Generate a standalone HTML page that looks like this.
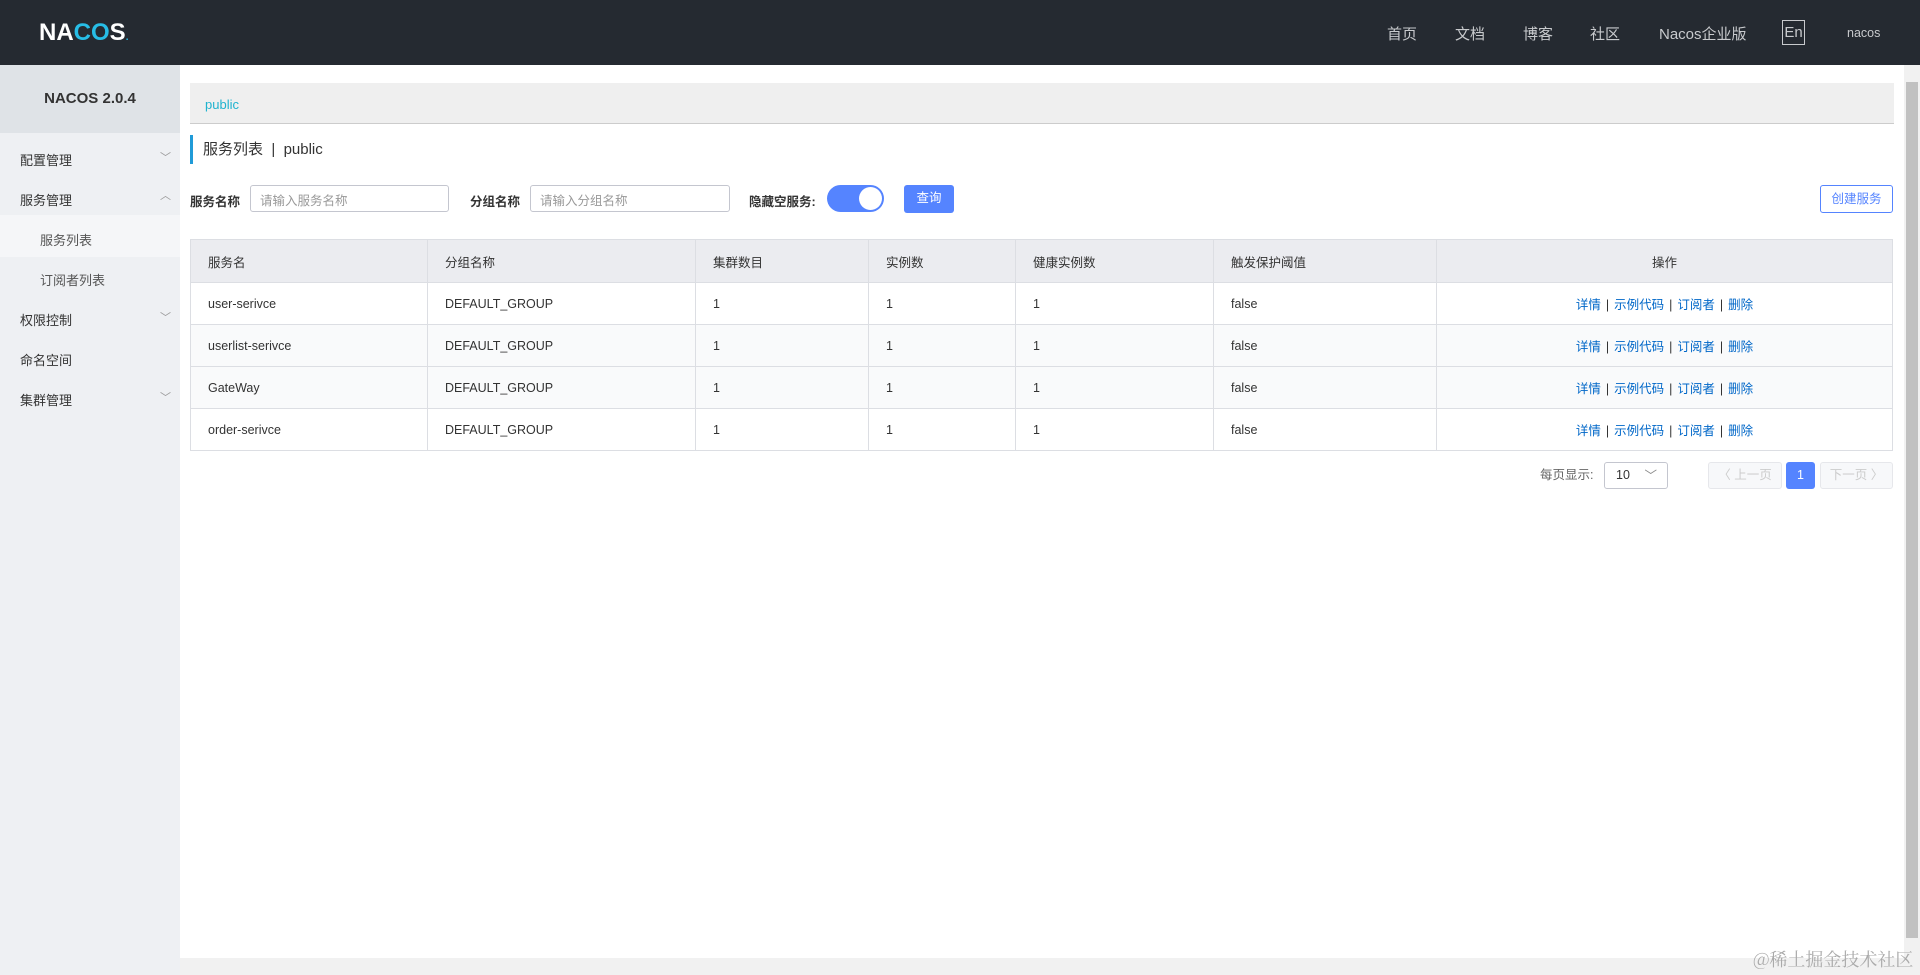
<!DOCTYPE html>
<html><head><meta charset="utf-8"><style>
*{box-sizing:border-box;margin:0;padding:0}
body{width:1920px;height:975px;overflow:hidden;background:#fff;font-family:"Liberation Sans","Noto Sans CJK SC",sans-serif;color:#333;position:relative}
.hdr{position:absolute;left:0;top:0;width:1920px;height:65px;background:#252a31}
.logo{position:absolute;left:39px;top:19px;font-size:24px;font-weight:bold;color:#fff}
.logo span{color:#27bde6}
.nav{position:absolute;top:23px;font-size:15px;color:#c8cacd}
.en{position:absolute;left:1782px;top:20px;width:23px;height:25px;border:1px solid #c8cacd;color:#c8cacd;font-size:15px;text-align:center;line-height:23px}
.side{position:absolute;left:0;top:65px;width:180px;height:910px;background:#eef0f3}
.ver{height:68px;background:#dfe3e7;text-align:center;line-height:68px;font-weight:bold;font-size:15px;color:#333}
.mi{position:absolute;left:20px;font-size:13px;color:#333}
.sub{position:absolute;left:40px;font-size:13px;color:#555}
.arr{position:absolute;left:160px;font-size:11px;color:#999}
.bc{position:absolute;left:190px;top:83px;width:1704px;height:41px;background:#efefef;border-bottom:1px solid #ccc;font-size:13px;color:#1fb3cf;padding:14px 0 0 15px}
.title{position:absolute;left:190px;top:135px;height:29px;border-left:3px solid #209bd8;padding-left:10px;font-size:15px;line-height:29px;color:#333}
.lbl{position:absolute;top:191px;font-size:12.5px;color:#333;font-weight:bold}
.inp{position:absolute;top:185px;height:27px;border:1px solid #c4c6cf;border-radius:3px;font-size:12.5px;color:#999;padding:4px 9px}
.tog{position:absolute;left:827px;top:185px;width:57px;height:27px;background:#5584ff;border-radius:14px}
.tog i{position:absolute;right:2px;top:2px;width:23px;height:23px;border-radius:50%;background:#fff}
.btn{position:absolute;top:185px;height:28px;font-size:12.5px;text-align:center;line-height:27px;border-radius:3px}
table{position:absolute;left:190px;top:239px;width:1703px;border-collapse:collapse;font-size:12.5px}
td,th{border:1px solid #dcdee3;height:42px;padding-left:17px;text-align:left;font-weight:normal;color:#333}
th{background:#ebecf0;height:43px}
tr.t td{background:#f9fafb}
.op{text-align:center;padding-left:0;color:#0067c8}
.op b{font-weight:normal;color:#333;margin:0 5px}
.pg{position:absolute;top:462px;height:27px;font-size:12.5px;border-radius:3px;text-align:center;line-height:27px}
.vs{position:absolute;left:1904px;top:65px;width:16px;height:893px;background:#f1f1f1}
.vs i{position:absolute;left:2px;top:17px;width:12px;height:856px;background:#c1c1c1}
.hs{position:absolute;left:180px;top:958px;width:1740px;height:17px;background:#f1f1f1}
.wm{position:absolute;left:1753px;top:946px;font-size:18px;color:#aaa;font-family:"Noto Serif CJK SC",serif}
</style></head><body>
<div class="hdr">
<div class="logo">NA<span>CO</span>S<span style="font-size:10px">.</span></div>
<div class="nav" style="left:1387px">首页</div>
<div class="nav" style="left:1455px">文档</div>
<div class="nav" style="left:1523px">博客</div>
<div class="nav" style="left:1590px">社区</div>
<div class="nav" style="left:1659px">Nacos企业版</div>
<div class="en">En</div>
<div class="nav" style="left:1847px;font-size:12.5px;top:26px">nacos</div>
</div>
<div class="side">
<div class="ver">NACOS 2.0.4</div>
<div class="mi" style="top:85px">配置管理</div><div class="arr" style="top:84px">﹀</div>
<div class="mi" style="top:125px">服务管理</div><div class="arr" style="top:122px">︿</div>
<div style="position:absolute;left:0;top:150px;width:180px;height:42px;background:#f5f6f8"></div>
<div class="sub" style="top:165px">服务列表</div>
<div class="sub" style="top:205px">订阅者列表</div>
<div class="mi" style="top:245px">权限控制</div><div class="arr" style="top:244px">﹀</div>
<div class="mi" style="top:285px">命名空间</div>
<div class="mi" style="top:325px">集群管理</div><div class="arr" style="top:324px">﹀</div>
</div>
<div class="bc">public</div>
<div class="title">服务列表 &nbsp;|&nbsp; public</div>
<div class="lbl" style="left:190px">服务名称</div>
<div class="inp" style="left:250px;width:199px">请输入服务名称</div>
<div class="lbl" style="left:470px">分组名称</div>
<div class="inp" style="left:530px;width:200px">请输入分组名称</div>
<div class="lbl" style="left:749px">隐藏空服务:</div>
<div class="tog"><i></i></div>
<div class="btn" style="left:904px;width:50px;background:#5584ff;color:#fff">查询</div>
<div class="btn" style="left:1820px;width:73px;border:1px solid #5584ff;color:#5584ff;background:#fff">创建服务</div>
<table>
<tr><th style="width:237px">服务名</th><th style="width:268px">分组名称</th><th style="width:173px">集群数目</th><th style="width:147px">实例数</th><th style="width:198px">健康实例数</th><th style="width:223px">触发保护阈值</th><th style="text-align:center;padding-left:0">操作</th></tr>
<tr><td>user-serivce</td><td>DEFAULT_GROUP</td><td>1</td><td>1</td><td>1</td><td>false</td><td class="op">详情<b>|</b>示例代码<b>|</b>订阅者<b>|</b>删除</td></tr>
<tr class="t"><td>userlist-serivce</td><td>DEFAULT_GROUP</td><td>1</td><td>1</td><td>1</td><td>false</td><td class="op">详情<b>|</b>示例代码<b>|</b>订阅者<b>|</b>删除</td></tr>
<tr class="t"><td>GateWay</td><td>DEFAULT_GROUP</td><td>1</td><td>1</td><td>1</td><td>false</td><td class="op">详情<b>|</b>示例代码<b>|</b>订阅者<b>|</b>删除</td></tr>
<tr><td>order-serivce</td><td>DEFAULT_GROUP</td><td>1</td><td>1</td><td>1</td><td>false</td><td class="op">详情<b>|</b>示例代码<b>|</b>订阅者<b>|</b>删除</td></tr>
</table>
<div class="pg" style="left:1540px;color:#666">每页显示:</div>
<div class="pg" style="left:1604px;width:64px;border:1px solid #c4c6cf;text-align:left;padding-left:11px;line-height:25px">10<span style="position:absolute;right:10px;top:3px;color:#888;line-height:20px">﹀</span></div>
<div class="pg" style="left:1708px;width:74px;background:#f7f8fa;border:1px solid #e6e7eb;color:#ccc;line-height:25px">〈 上一页</div>
<div class="pg" style="left:1786px;width:29px;background:#5584ff;color:#fff">1</div>
<div class="pg" style="left:1820px;width:73px;background:#f7f8fa;border:1px solid #e6e7eb;color:#ccc;line-height:25px">下一页 〉</div>
<div class="vs"><i></i></div>
<div class="hs"></div>
<div class="wm">@稀土掘金技术社区</div>
</body></html>
